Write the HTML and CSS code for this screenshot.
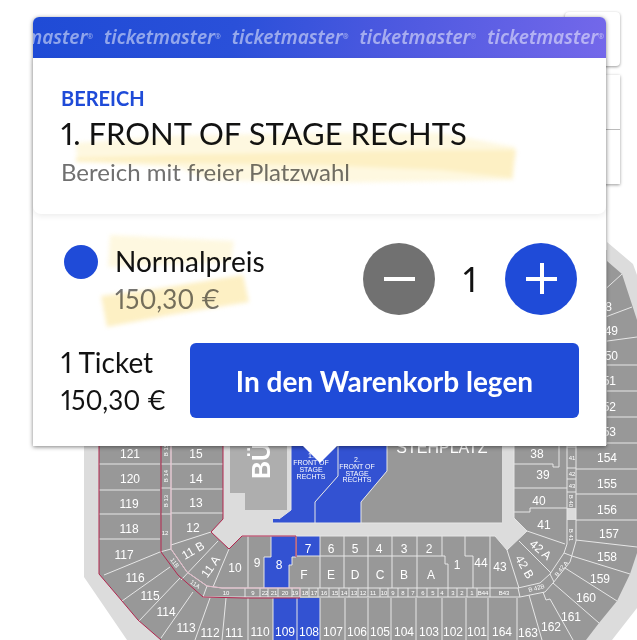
FILE: index.html
```html
<!DOCTYPE html>
<html lang="de">
<head>
  <meta charset="UTF-8">
  <meta name="viewport" content="width=device-width, initial-scale=1">
  <title>Ticketauswahl – Saalplan</title>
  <link rel="stylesheet" href="styles.css">
</head>
<body>

  <!-- Saalplan -->
  <svg class="map" viewBox="0 0 637 640" preserveAspectRatio="xMinYMin slice" role="img" aria-label="Saalplan">
    <path class="ground" d="M84 250H607V242L633 264L637 275V608L612 640H127L84 577Z"/>

    <!-- Oberrang und Unterrang -->
    <path class="block" d="M99 445H223V519L211 532L229 549L242 536H495L507 550L527 531L514 518V445H607V261L622 274L637 320V553L630 574L617 601L599 623L586 640H161L138 620L122 601L99 574Z"/>
    <path class="stage" d="M230 440H287V510H245V493H230Z"/>
    <path class="block" d="M386 440H502V523H361V502L387 471Z"/>
    <rect class="ground" x="567" y="508" width="9" height="12"/>

    <!-- ausgewählte Bereiche -->
    <path class="active" d="M291 440H338V476L315 502V523H273V519H279L291 510Z"/>
    <path class="active" d="M338 440H387V471L361 502V523H315V502L338 476Z"/>
    <path class="active" d="M271 536H296V557H292V565H289V588H264V557H271Z"/>
    <path class="active" d="M297 536H320V556H297ZM273 598H320V640H273Z"/>

    <g class="lines">
      <path d="M291 440V510L279 519M338 440V476L315 502V523M387 440V471L361 502V523M273 523H502"/>
      <path d="M99 464H160M99 490H160M99 514H160M99 539H160M160 552L104 575M170 567L122 601M180 578L139 621M193 592L161 638M210 598L195 640M226 598L222 640"/>
      <path d="M171 464H223M171 489H223M171 513H223M171 545L211 532M218 541L181 580M229 549L213 587M161 464H171M161 488H171M161 514H171M160 552L171 549M207 586L203 597"/>
      <path d="M171 445V549L187 572L207 586L222 588H518L540 583L550 574L564 553L567 544V445"/>
      <path d="M203 597H520L545 592L553 583L570 562L576 541V445"/>
      <path d="M242 536H495L507 550L519 588M229 549L242 536M248 536V588M271 536V557H264V588M296 536V557H292V565H289V588M297 556H445V564H448V588M320 536V588M344 536V588M368 536V588M392 536V588M417 536V588M442 536V556M465 536V556H473V588M490 536V588"/>
      <path d="M248 598V640M273 598V640M297 598V640M320 598V640M345 598V640M368 598V640M391 598V640M416 598V640M442 598V640M466 598V640M488 598V640M517 598V640"/>
      <path d="M245 588V597M260 588V597M268 588V597M278 588V597M292 588V597M300 588V597M309 588V597M318 588V597M329 588V597M339 588V597M349 588V597M358 588V597M368 588V597M380 588V597M388 588V597M398 588V597M408 588V597M417 588V597M427 588V597M438 588V597M448 588V597M457 588V597M467 588V597M477 588V597M490 588V597M518 588L520 597"/>
      <path d="M514 445V518L527 531L507 550M514 464H553V467H559V440M514 488H567M514 512H530V508H567M527 531L565 544M519 541L551 573M567 447H576M567 468H576M567 479H576M567 492H576M564 553L572 556M550 574L554 582"/>
      <path d="M529 595L542 640M543 592L546 600L550 599L573 640M553 583L599 623M565 568L617 601M572 556L630 574M576 540L637 547M576 520H637M576 494H637M576 469H637M576 443H637M600 417H637M600 391H637M600 365H637M600 342L637 337M600 319L632 307M600 294L622 274"/>
    </g>
    <g class="price-line">
      <path d="M99 440V574L122 601L138 620L161 640"/>
      <path d="M161 440V552L178 575L203 597L245 598H300"/>
      <path d="M223 440V519L211 532L229 549L242 536H296V557"/>
    </g>
    <path class="price-line-soft" d="M171 440V549L187 572L207 586L222 588H300V597"/>

    <g class="seat">
      <text x="130" y="458">121</text><text x="130" y="483">120</text><text x="129" y="508">119</text><text x="129" y="533">118</text>
      <text x="124" y="559">117</text><text x="135" y="582">116</text><text x="150" y="600">115</text><text x="166" y="616">114</text>
      <text x="186" y="632">113</text><text x="210" y="637">112</text><text x="234" y="637">111</text><text x="260" y="636">110</text>
      <text x="285" y="636">109</text><text x="309" y="636">108</text><text x="333" y="636">107</text><text x="357" y="636">106</text>
      <text x="380" y="636">105</text><text x="404" y="636">104</text><text x="429" y="636">103</text><text x="453" y="636">102</text>
      <text x="477" y="636">101</text><text x="502" y="636">164</text><text x="528" y="637">163</text><text x="551" y="631">162</text>
      <text x="571" y="621">161</text><text x="586" y="602">160</text><text x="600" y="583">159</text><text x="607" y="561">158</text>
      <text x="609" y="538">157</text><text x="607" y="514">156</text><text x="607" y="488">155</text><text x="607" y="462">154</text>
      <text x="606" y="436">153</text><text x="606" y="411">152</text><text x="606" y="385">151</text><text x="608" y="360">150</text>
      <text x="608" y="335">149</text><text x="602" y="311">148</text>
      <text x="196" y="458">15</text><text x="196" y="483">14</text><text x="196" y="507">13</text><text x="193" y="532">12</text>
      <text x="235" y="572">10</text><text x="257" y="567">9</text><text x="279" y="569">8</text><text x="308" y="553">7</text>
      <text x="331" y="553">6</text><text x="355" y="553">5</text><text x="379" y="553">4</text><text x="404" y="553">3</text><text x="429" y="553">2</text>
      <text x="304" y="579">F</text><text x="331" y="579">E</text><text x="355" y="579">D</text><text x="380" y="579">C</text><text x="404" y="579">B</text><text x="431" y="579">A</text>
      <text x="457" y="569">1</text><text x="481" y="567">44</text><text x="500" y="571">43</text>
      <text x="537" y="458">38</text><text x="543" y="479">39</text><text x="539" y="505">40</text><text x="544" y="529">41</text>
      <text transform="translate(195 554) rotate(-30)">11 B</text>
      <text transform="translate(214 569) rotate(-55)">11 A</text>
      <text transform="translate(538 553) rotate(40)">42 A</text>
      <text transform="translate(521 569) rotate(60)">42 B</text>
    </g>

    <g class="seat-small">
      <text x="165" y="535">12</text><text x="226" y="595">10</text><text x="253" y="595">9</text><text x="265" y="595">22</text><text x="274" y="595">21</text>
      <text x="285" y="595">20</text><text x="295" y="595">19</text><text x="305" y="595">18</text><text x="314" y="595">17</text><text x="324" y="595">16</text>
      <text x="335" y="595">15</text><text x="344" y="595">14</text><text x="354" y="595">13</text><text x="363" y="595">12</text><text x="373" y="595">11</text>
      <text x="384" y="595">10</text><text x="393" y="595">9</text><text x="403" y="595">8</text><text x="413" y="595">7</text><text x="423" y="595">6</text>
      <text x="433" y="595">5</text><text x="442" y="595">4</text><text x="453" y="595">3</text><text x="462" y="595">2</text><text x="472" y="595">1</text>
      <text x="483" y="595">B44</text><text x="504" y="595">B43</text>
      <text x="572" y="460">41</text><text x="572" y="476">42</text><text x="572" y="488">43</text>
      <text transform="translate(168 450) rotate(-90)">B 15</text>
      <text transform="translate(168 476) rotate(-90)">B 14</text>
      <text transform="translate(168 501) rotate(-90)">B 13</text>
      <text transform="translate(173 564) rotate(55)">11B</text>
      <text transform="translate(194 586) rotate(35)">11A</text>
      <text transform="translate(569 501) rotate(90)">B 40</text>
      <text transform="translate(569 535) rotate(90)">B 41</text>
      <text transform="translate(563 570) rotate(-52)">B 42 A</text>
      <text transform="translate(537 590) rotate(-15)">B 42B</text>
    </g>

    <g class="zone">
      <text x="311" y="458">1.</text><text x="311" y="465">FRONT OF</text><text x="311" y="472">STAGE</text><text x="311" y="479">RECHTS</text>
      <text x="357" y="462">2.</text><text x="357" y="469">FRONT OF</text><text x="357" y="476">STAGE</text><text x="357" y="482">RECHTS</text>
    </g>
    <text class="standing" x="442" y="453">STEHPLATZ</text>
    <text class="stage-name" transform="translate(270 479) rotate(-90)">BÜHNE</text>
  </svg>

  <div class="map-controls">
    <button class="map-button" type="button" aria-label="Ansicht zurücksetzen"></button>
    <div class="map-zoom">
      <button type="button" aria-label="Vergrößern"></button>
      <button type="button" aria-label="Verkleinern"></button>
    </div>
  </div>

  <main class="card">
    <div class="brand-strip">
      <span>ticketmaster<sup>®</sup></span>
      <span>ticketmaster<sup>®</sup></span>
      <span>ticketmaster<sup>®</sup></span>
      <span>ticketmaster<sup>®</sup></span>
      <span>ticketmaster<sup>®</sup></span>
    </div>

    <header class="area">
      <p class="area-label">BEREICH</p>
      <h1>1. FRONT OF STAGE RECHTS</h1>
      <p class="area-info">Bereich mit freier Platzwahl</p>
    </header>

    <div class="order">
      <div class="price-row">
        <span class="dot"></span>
        <div class="price">
          <p>Normalpreis</p>
          <p class="amount muted">150,30 €</p>
        </div>
        <div class="stepper">
          <button class="minus" type="button" aria-label="Weniger">
            <svg viewBox="0 0 72 72"><path d="M21 36H52"/></svg>
          </button>
          <output>1</output>
          <button class="plus" type="button" aria-label="Mehr">
            <svg viewBox="0 0 72 72"><path d="M21 36H52M37 20V51"/></svg>
          </button>
        </div>
      </div>

      <div class="total-row">
        <div class="total">
          <p>1 Ticket</p>
          <p class="amount">150,30 €</p>
        </div>
        <button class="buy" type="button">In den Warenkorb legen</button>
      </div>
    </div>

    <!-- Textmarker -->
    <svg class="marker" width="520" height="330" viewBox="33 17 520 330" aria-hidden="true">
      <path class="light" d="M76 143L165 136L320 133L440 133L515 147L513 180L330 183L210 180L180 168L77 161Z"/>
      <path d="M76 158L170 155L320 152L440 150L516 150L512 178L440 170L320 165L180 163L76 162Z"/>
      <path class="light" d="M110 235L234 241L231 262L108 267Z"/>
      <path d="M101 296L155 289L243 275L249 302L170 315L107 327Z"/>
    </svg>
    <span class="pointer"></span>
  </main>

</body>
</html>
```

FILE: styles.css
```css
* {
  box-sizing: border-box;
}
body {
  position: relative;
  min-height: 100vh;
  margin: 0;
  padding: 17px 31px 0 33px;
  overflow: hidden;
  background: #fff;
  color: #121212;
  font-family: Lato, sans-serif;
  font-variant-numeric: proportional-nums;
}
h1,
p {
  margin: 0;
  font-weight: normal;
}
button {
  padding: 0;
  border: none;
  font-family: inherit;
  cursor: pointer;
}

/* Saalplan */
.map {
  position: absolute;
  top: 0;
  left: 0;
  width: 100%;
  height: 100%;
}
.map text {
  fill: #fff;
  font-family: "Liberation Sans", Arial, sans-serif;
  text-anchor: middle;
}
.ground {
  fill: #dcdcdc;
}
.block {
  fill: #989898;
}
.stage {
  fill: #aeaeae;
}
.active {
  fill: #3352d2;
}
.lines {
  fill: none;
  stroke: #e6e6e6;
  stroke-width: 1;
}
.price-line {
  fill: none;
  stroke: #b3264f;
  stroke-width: 1;
}
.price-line-soft {
  fill: none;
  stroke: #e3b9c8;
  stroke-width: 1;
}
.seat {
  font-size: 12px;
}
.seat-small {
  font-size: 6px;
}
.zone {
  font-size: 7px;
}
.standing {
  font-size: 16px;
}
.map .stage-name {
  font-size: 25px;
  font-weight: bold;
  text-anchor: start;
}

/* Schaltflächen neben der Karte */
.map-controls {
  position: absolute;
  top: 12px;
  right: 17px;
  width: 55px;
}
.map-controls button {
  display: block;
  width: 100%;
  height: 54px;
  background: #fff;
}
.map-controls .map-button {
  margin-bottom: 9px;
  border-radius: 4px;
  box-shadow: 0 1px 3px rgba(0,0,0,0.4);
}
.map-zoom {
  box-shadow: 0 1px 3px rgba(0,0,0,0.4);
}
.map-zoom button + button {
  height: 55px;
  border-top: 1px solid #bbb;
}

/* Karte */
.card {
  position: relative;
  border-radius: 6px 6px 0 0;
  background: #fff;
  box-shadow: 0 1px 4px rgba(0,0,0,0.5);
}
.brand-strip {
  display: flex;
  justify-content: flex-end;
  align-items: center;
  gap: 11px;
  height: 41px;
  padding: 0 2px 2px 0;
  overflow: hidden;
  border-radius: 6px 6px 0 0;
  background: linear-gradient(100deg, #1f4bd6 0%, #2a50d9 35%, #4a58df 60%, #7468ea 100%);
  color: rgba(255,255,255,0.5);
  font-family: "Noto Sans", sans-serif;
  font-size: 19px;
  font-style: italic;
  font-weight: 600;
}
.brand-strip span {
  flex: none;
}
.brand-strip sup {
  font-size: 7px;
  line-height: 1;
  vertical-align: 5px;
}
.area {
  padding: 28px;
  border-radius: 0 0 8px 8px;
  box-shadow: 0 2px 6px rgba(0,0,0,0.08);
}
.area-label {
  color: #1f4bd8;
  font-size: 20px;
  font-weight: bold;
  line-height: 24px;
}
.area h1 {
  margin: 3px 0 4px;
  font-size: 31px;
  line-height: 40px;
  white-space: nowrap;
}
.area-info {
  color: #707070;
  font-size: 24px;
  line-height: 29px;
}
.order {
  padding: 29px 27px 27px 28px;
  font-size: 28px;
  line-height: 38px;
}
.price-row {
  display: flex;
  align-items: flex-start;
  margin-bottom: 24px;
}
.dot {
  width: 34px;
  height: 34px;
  margin: 2px 17px 0 3px;
  border-radius: 50%;
  background: #1f4bd8;
}
.price {
  flex: 1;
}
.price p {
  margin-top: -1px;
  margin-bottom: 1px;
}
.amount {
  font-size: 26px;
}
.muted {
  color: #757575;
}
.stepper {
  display: flex;
  align-items: center;
  margin-right: 2px;
}
.stepper button {
  width: 72px;
  height: 72px;
  border-radius: 50%;
}
.stepper svg {
  display: block;
  fill: none;
  stroke: #fff;
  stroke-width: 4;
}
.minus {
  background: #717171;
}
.plus {
  background: #1f4bd8;
}
.stepper output {
  width: 70px;
  font-size: 34px;
  text-align: center;
}
.total-row {
  display: flex;
  justify-content: space-between;
  gap: 24px;
}
.total {
  flex: none;
  width: 105px;
  white-space: nowrap;
}
.buy {
  flex: 1;
  height: 75px;
  border-radius: 6px;
  background: #1f4bd8;
  color: #fff;
  font-size: 28px;
  font-weight: bold;
}

/* liegt über dem Text */
.marker {
  position: absolute;
  top: 0;
  left: 0;
  fill: #fdf0c4;
  filter: blur(2px);
  mix-blend-mode: multiply;
  pointer-events: none;
}
.marker .light {
  fill: #fef8e0;
}
.pointer {
  position: absolute;
  top: 100%;
  left: 50%;
  margin-left: -17px;
  border: 17px solid transparent;
  border-top-color: #fff;
  border-bottom: none;
}
```
